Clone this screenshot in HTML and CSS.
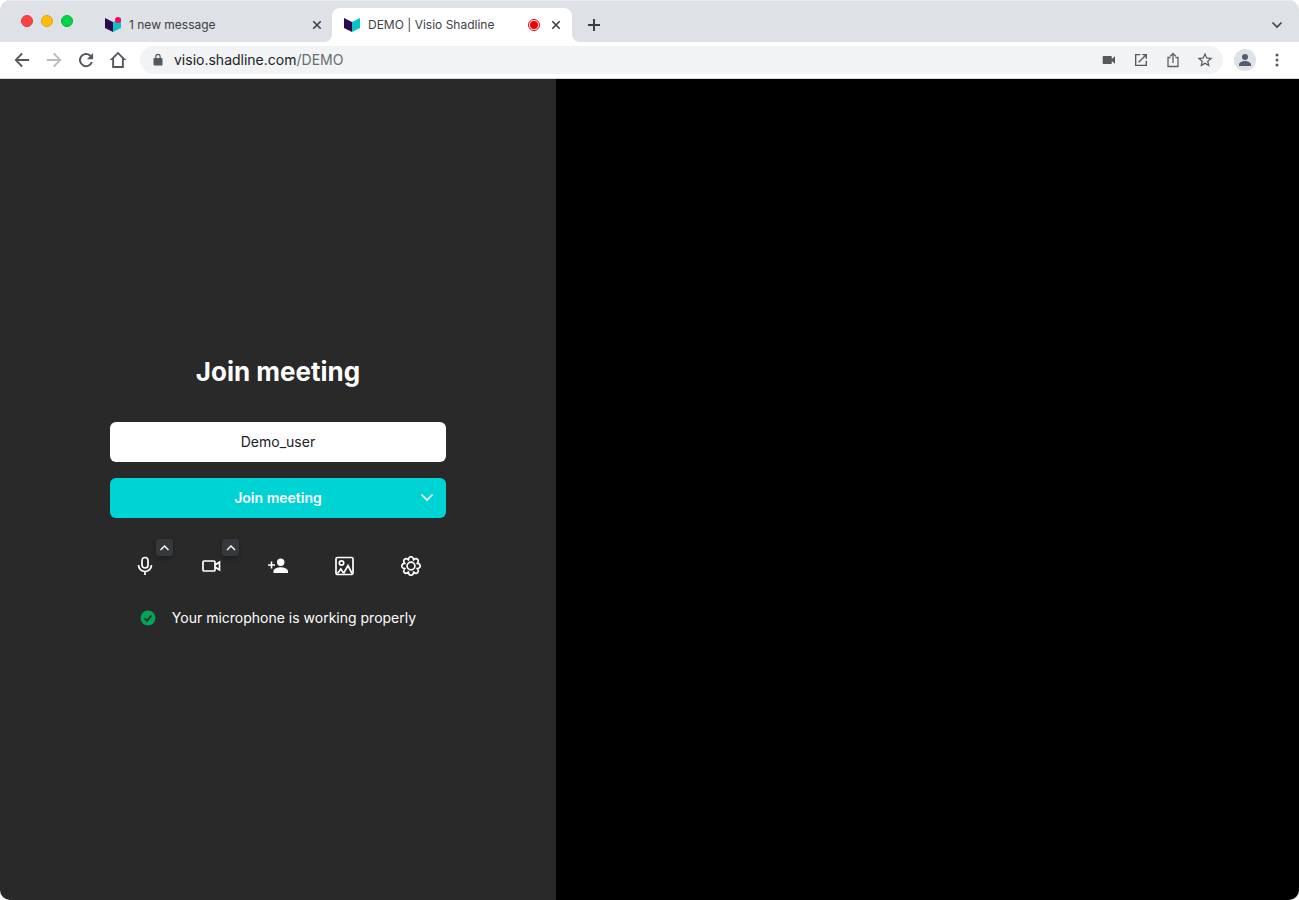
FILE: index.html
```html
<!DOCTYPE html>
<html lang="en">
	<head>
		<meta charset="UTF-8">
		<meta name="viewport" content="width=device-width, initial-scale=1.0">
		<title>DEMO | Visio Shadline</title>
		<link rel="stylesheet" href="styles.css">
	</head>
	<body>
		<div class="window">

			<!-- tab strip -->
			<header class="tabs">
				<div class="lights">
					<span class="light red"></span>
					<span class="light yellow"></span>
					<span class="light green"></span>
				</div>
				<div class="tab">
					<svg class="favicon" viewBox="0 0 16 16"><path fill="#2d0a4b" d="M0 2l8 4v10l-8-4z"/><path fill="#08c4c9" d="M16 2L8 6v10l8-4z"/><circle cx="13" cy="4" r="3" fill="#ff0558"/></svg>
					<a class="tabTitle" href="#">1 new message</a>
					<button class="close" aria-label="Close tab"><svg width="10" height="10" viewBox="0 0 10 10"><path d="M1.300 1.300l7.400 7.400M8.700 1.300L1.300 8.700"/></svg></button>
				</div>
				<div class="tab active">
					<svg class="favicon" viewBox="0 0 16 16"><path fill="#2d0a4b" d="M0 2l8 4v10l-8-4z"/><path fill="#08c4c9" d="M16 2L8 6v10l8-4z"/></svg>
					<a class="tabTitle" href="#">DEMO | Visio Shadline</a>
					<svg class="recording" width="12" height="12" viewBox="0 0 12 12"><circle cx="6" cy="6" r="5.500" fill="#fff" stroke="#f00000"/><circle cx="6" cy="6" r="4" fill="#f00000"/></svg>
					<button class="close" aria-label="Close tab"><svg width="10" height="10" viewBox="0 0 10 10"><path d="M1.300 1.300l7.400 7.400M8.700 1.300L1.300 8.700"/></svg></button>
				</div>
				<button class="newTab" aria-label="New tab"><svg width="12" height="12" viewBox="0 0 12 12"><path d="M6 0v12M0 6h12"/></svg></button>
				<button class="tabSearch" aria-label="Search tabs"><svg width="12" height="12" viewBox="0 0 12 12"><path d="M1.500 3.500L6 8l4.500-4.500"/></svg></button>
			</header>

			<!-- address bar -->
			<nav class="toolbar">
				<button class="navBtn" aria-label="Back"><svg width="20" height="20" viewBox="0 0 24 24"><path d="M20.500 10.800H7.200l5.800-5.800-1.600-1.600L3 12l8.400 8.600L13 19l-5.800-5.800h13.300z"/></svg></button>
				<button class="navBtn off" aria-label="Forward"><svg width="20" height="20" viewBox="0 0 24 24"><path d="M3.500 10.800h13.300L11 5l1.600-1.600L21 12l-8.400 8.600L11 19l5.800-5.800H3.500z"/></svg></button>
				<button class="navBtn" aria-label="Reload"><svg width="20" height="20" viewBox="0 0 24 24"><path d="M18 6A8.500 8.500 0 1 0 20.200 14.500h-2.500A6.100 6.100 0 1 1 16.300 7.700L13 11h7.500V3.500z"/></svg></button>
				<button class="navBtn" aria-label="Home"><svg width="20" height="20" viewBox="0 0 24 24"><path d="M12 2L2 12h3V21.500h14V12h3zM12 5.200l4.700 4.700V19.200H7.300V9.900z" fill-rule="evenodd"/></svg></button>
				<div class="omnibox">
					<svg class="lock" width="10" height="14" viewBox="0 0 10 14"><path fill-rule="evenodd" d="M1.500 5h.8V3.500a2.700 2.700 0 0 1 5.400 0V5h.8a1 1 0 0 1 1 1v5.500a1 1 0 0 1-1 1h-7a1 1 0 0 1-1-1V6a1 1 0 0 1 1-1zm2 0h3V3.500a1.500 1.500 0 0 0-3 0z"/></svg>
					<a class="url" href="#">visio.shadline.com<span>/DEMO</span></a>
					<button class="action" aria-label="Camera in use"><svg width="16" height="16" viewBox="0 0 16 16"><path d="M2.500 4h7.500a.8.800 0 0 1 .8.800v2.300L14 4.300v7.400l-3.200-2.800v2.300a.8.800 0 0 1-.8.800H2.500a.8.800 0 0 1-.8-.8V4.800a.8.800 0 0 1 .8-.8z"/></svg></button>
					<button class="action" aria-label="Open in app"><svg width="16" height="16" viewBox="0 0 24 24"><path d="M19 19H5V5h6V3H3v18h18v-8h-2zM14 3v2h3.600l-9.800 9.800 1.400 1.400L19 6.400V10h2V3z"/></svg></button>
					<button class="action" aria-label="Share"><svg width="16" height="16" viewBox="0 0 16 16"><path class="line" d="M5.500 5.500H3v9h10v-9h-2.500M8 11V1.800M5.200 4.300L8 1.500l2.800 2.800"/></svg></button>
					<button class="action" aria-label="Bookmark"><svg width="18" height="18" viewBox="0 0 24 24"><path d="M22 9.240l-7.190-.62L12 2 9.190 8.630 2 9.240l5.460 4.730L5.820 21 12 17.270 18.180 21l-1.630-7.030zM12 15.400l-3.760 2.270 1-4.280-3.320-2.880 4.380-.38L12 6.100l1.710 4.040 4.380.38-3.320 2.880 1 4.280z"/></svg></button>
				</div>
				<button class="profile" aria-label="Profile"><svg width="16" height="16" viewBox="0 0 16 16"><circle cx="8" cy="5" r="3"/><path d="M2 14v-1.500C2 10.300 5.500 9 8 9s6 1.300 6 3.500V14z"/></svg></button>
				<button class="more" aria-label="Menu"><svg width="4" height="14" viewBox="0 0 4 14"><circle cx="2" cy="2" r="1.500"/><circle cx="2" cy="7" r="1.500"/><circle cx="2" cy="12" r="1.500"/></svg></button>
			</nav>

			<main class="page">
				<section class="prejoin">
					<form class="joinForm">
						<h1>Join meeting</h1>
						<input class="name" type="text" name="name" value="Demo_user" aria-label="Your name">
						<div class="joinRow">
							<button class="join" type="button">Join meeting</button>
							<button class="joinMore" type="button" aria-label="More ways to join"><svg width="14" height="14" viewBox="0 0 14 14"><path d="M1.500 3.500L7 9l5.500-5.500"/></svg></button>
						</div>
						<div class="tools">
							<div class="tool">
								<button type="button" aria-label="Microphone"><svg width="20" height="20" viewBox="0 0 20 20"><rect x="7" y="1.500" width="6" height="10.500" rx="3"/><path d="M3.500 9a6.500 6.500 0 0 0 13 0M10 15.500V19"/></svg></button>
								<button class="expand" type="button" aria-label="Audio settings"><svg width="10" height="10" viewBox="0 0 10 10"><path d="M1.500 7L5.500 3l4 4"/></svg></button>
							</div>
							<div class="tool">
								<button type="button" aria-label="Camera"><svg width="20" height="20" viewBox="0 0 20 20"><rect x="1" y="5" width="12" height="10" rx="1"/><path d="M13 9l4.500-3v8L13 11"/></svg></button>
								<button class="expand" type="button" aria-label="Video settings"><svg width="10" height="10" viewBox="0 0 10 10"><path d="M1 7l4-4 4 4"/></svg></button>
							</div>
							<div class="tool">
								<button type="button" aria-label="Invite people"><svg class="solid" width="20" height="20" viewBox="0 0 20 20"><circle cx="12.700" cy="6.200" r="3.700"/><path d="M5.500 17v-2c0-2.500 4.500-3.800 7.200-3.800S20 12.500 20 15v2zM2.700 5.500h1.600v2.700H7v1.600H4.300v2.700H2.700V9.800H0V8.200h2.700z"/></svg></button>
							</div>
							<div class="tool">
								<button type="button" aria-label="Background"><svg width="20" height="20" viewBox="0 0 20 20"><rect x="2" y="1.500" width="17" height="17" rx="1.500"/><circle cx="7.500" cy="7" r="2.200"/><path d="M3.500 17.500L6.800 13l2.700 4M9.500 17.500L14 9.500l4 8"/></svg></button>
							</div>
							<div class="tool">
								<button type="button" aria-label="Settings"><svg width="20" height="20" viewBox="-10 -10 20 20"><circle r="3.900"/><path d="M-2.600-6.300C-2-10.300 2-10.300 2.600-6.300C5.900-8.700 8.700-5.900 6.300-2.600C10.300-2 10.300 2 6.300 2.600C8.700 5.900 5.900 8.700 2.600 6.300C2 10.300-2 10.300-2.600 6.300C-5.900 8.700-8.700 5.900-6.300 2.600C-10.300 2-10.300-2-6.300-2.600C-8.700-5.900-5.900-8.700-2.600-6.300z"/></svg></button>
							</div>
						</div>
						<p class="status">
							<svg width="16" height="16" viewBox="0 0 16 16"><circle cx="8" cy="8" r="7.500" fill="#04a457"/><path d="M4.500 8.300L7 10.800l4.600-5.300"/></svg>
							Your microphone is working properly
						</p>
					</form>
				</section>
				<section class="preview"></section>
			</main>

		</div>
	</body>
</html>
```
FILE: styles.css
```css
* {
  margin: 0;
  padding: 0;
  box-sizing: border-box;
}

body {
  background-color: #fff;
  font-family: Inter, "Liberation Sans", sans-serif;
  font-size: 14px;
}

button {
  display: flex;
  align-items: center;
  justify-content: center;
  flex: none;
  border: 0;
  background: none;
  font-family: inherit;
  cursor: pointer;
}

svg {
  flex: none;
  display: block;
}

a {
  color: inherit;
  text-decoration: none;
}

.window {
  display: flex;
  flex-direction: column;
  min-height: 100vh;
  border-radius: 10px;
  overflow: hidden;
}

/* tab strip */
.tabs {
  display: flex;
  align-items: flex-end;
  height: 42px;
  background-color: #dee1e6;
  border-top: 1px solid #e8ebee;
  color: #3c4043;
}

.lights {
  display: flex;
  align-items: center;
  gap: 8px;
  width: 93px;
  height: 41px;
  padding-left: 21px;
  padding-bottom: 1px;
}

.light {
  width: 12px;
  height: 12px;
  border-radius: 50%;
  border: 1px solid #e0343a;
  background-color: #ff4245;
}

.yellow {
  background-color: #ffbd05;
  border-color: #e0a010;
}

.green {
  background-color: #00d543;
  border-color: #0bb03a;
}

.tab {
  display: flex;
  align-items: center;
  width: 239px;
  height: 34px;
  padding: 0 7px 0 12px;
  font-size: 12px;
}

.active {
  position: relative;
  width: 240px;
  padding-right: 8px;
  background-color: #fff;
  border-radius: 8px 8px 0 0;
}

.active::before,
.active::after {
  content: "";
  position: absolute;
  bottom: 0;
  width: 8px;
  height: 8px;
}

.active::before {
  right: 100%;
  background: radial-gradient(circle at 0 0, #dee1e6 8px, #fff 8px);
}

.active::after {
  left: 100%;
  background: radial-gradient(circle at 100% 0, #dee1e6 8px, #fff 8px);
}

.favicon {
  width: 16px;
  height: 16px;
  margin-right: 8px;
  margin-bottom: 2px;
}

.tabTitle {
  flex: 1;
  padding-bottom: 2px;
  white-space: nowrap;
}

.close {
  width: 16px;
  height: 16px;
}

.recording {
  margin-right: 8px;
}

.tabs button path {
  fill: none;
  stroke: #3c4043;
  stroke-width: 1.6;
}

.newTab {
  width: 28px;
  height: 34px;
  margin-left: 8px;
}

.tabs .newTab path {
  stroke-width: 2;
}

.tabSearch {
  width: 28px;
  height: 34px;
  margin-left: auto;
  margin-right: 8px;
}

/* address bar */
.toolbar {
  display: flex;
  align-items: center;
  height: 37px;
  padding: 0 8px 0 6px;
  background-color: #fff;
  border-bottom: 1px solid #d5d7da;
  fill: #55595e;
}

.navBtn {
  width: 32px;
  height: 28px;
}

.off {
  fill: #b9bbbe;
}

.omnibox {
  display: flex;
  align-items: center;
  flex: 1;
  height: 28px;
  margin-left: 6px;
  padding: 0 2px 0 13px;
  border-radius: 14px;
  background-color: #f1f3f4;
}

.url {
  flex: 1;
  margin-left: 11px;
  padding-bottom: 2px;
  color: #202124;
}

.url span {
  color: #696c70;
}

.action {
  width: 32px;
  height: 28px;
}

.line {
  fill: none;
  stroke: #5f6368;
  stroke-width: 1.3;
}

.profile {
  width: 22px;
  height: 22px;
  margin-left: 11px;
  border-radius: 50%;
  background-color: #dee1e6;
  fill: #515c74;
}

.more {
  width: 28px;
  height: 28px;
  margin-left: 7px;
}

/* pre-join screen */
.page {
  display: flex;
  flex: 1;
}

.prejoin {
  display: flex;
  align-items: center;
  justify-content: center;
  flex: 0 0 42.8%;
  padding: 0 24px;
  background-color: #292929;
  color: #fff;
}

.preview {
  flex: 1;
  background-color: #000;
}

.joinForm {
  width: 100%;
  max-width: 336px;
}

h1 {
  margin-bottom: 30px;
  font-size: 26px;
  line-height: 40px;
  font-weight: 700;
  text-align: center;
}

.name {
  display: block;
  width: 100%;
  height: 40px;
  padding-bottom: 2px;
  border: 0;
  border-radius: 6px;
  background-color: #fff;
  color: #1c2025;
  font-family: inherit;
  font-size: 14px;
  text-align: center;
}

.joinRow {
  position: relative;
  margin-top: 16px;
}

.join {
  width: 100%;
  height: 40px;
  padding-bottom: 2px;
  border-radius: 6px;
  background-color: #00d3d3;
  color: #fff;
  font-size: 14px;
  font-weight: 600;
}

.joinMore {
  position: absolute;
  top: 0;
  right: 0;
  width: 38px;
  height: 40px;
}

.joinForm button path,
.joinForm rect,
.tool circle {
  fill: none;
  stroke: #fff;
  stroke-width: 1.7;
}

.tools {
  display: flex;
  margin-top: 24px;
  padding: 0 2px;
}

.tool {
  position: relative;
  display: flex;
  justify-content: center;
  flex: 1;
}

.tool button {
  width: 48px;
  height: 48px;
}

.tool .solid path,
.tool .solid circle {
  fill: #fff;
  stroke: none;
}

.tool .expand {
  position: absolute;
  top: -3px;
  left: 44px;
  width: 17px;
  height: 17px;
  border-radius: 3px;
  background-color: #36383c;
  box-shadow: 0 2px 4px rgba(0, 0, 0, 0.3);
}

.tool .expand path {
  stroke-width: 1.4;
}

.status {
  display: flex;
  align-items: center;
  justify-content: center;
  gap: 16px;
  margin-top: 18px;
  line-height: 19px;
  white-space: nowrap;
}

.status path {
  fill: none;
  stroke: #292929;
  stroke-width: 1.8;
}
```
